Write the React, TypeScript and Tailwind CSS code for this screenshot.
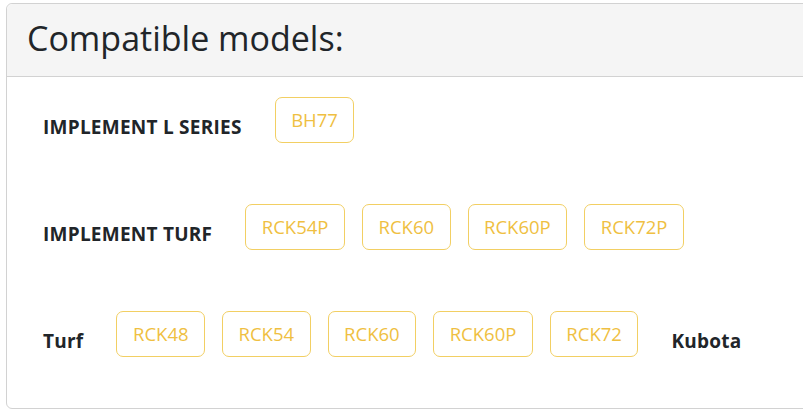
import React from 'react';

const rows: Array<{ label: string; models: string[]; brand?: string }> = [
  { label: 'IMPLEMENT L SERIES', models: ['BH77'] },
  { label: 'IMPLEMENT TURF', models: ['RCK54P', 'RCK60', 'RCK60P', 'RCK72P'] },
  { label: 'Turf', models: ['RCK48', 'RCK54', 'RCK60', 'RCK60P', 'RCK72'], brand: 'Kubota' },
];

function ModelTag({ name }: { name: string }) {
  return (
    <span className="flex h-[46px] items-center rounded-[7px] border border-[#f2cf63] px-[15.5px] text-[18.5px] text-[#efbf42]">
      {name}
    </span>
  );
}

export default function App() {
  return (
    <div className="h-[418px] w-[803px] overflow-hidden bg-white pl-[6px] pt-[3px] font-['Open_Sans',sans-serif]">
      <div className="w-[820px] rounded-[6px] border border-[#d2d2d2] bg-white">
        <div className="flex h-[73px] items-center rounded-t-[6px] border-b border-[#d2d2d2] bg-[#f5f5f5] px-[20px] pb-[5px]">
          <h2 className="text-[34px] font-medium leading-none text-[#212529]">Compatible models:</h2>
        </div>
        <div className="flex h-[331px] flex-col gap-[61px] pl-[36px] pt-[20px]">
          {rows.map((row) => (
            <div key={row.label} className="flex items-center">
              <span className="mr-[33px] mt-[14px] text-[19px] font-bold tracking-[0.25px] text-[#212529]">{row.label}</span>
              <div className="flex gap-[17px]">
                {row.models.map((m, i) => (
                  <ModelTag key={m + i} name={m} />
                ))}
              </div>
              {row.brand && (
                <span className="ml-[33px] mt-[14px] text-[19px] font-bold tracking-[0.25px] text-[#212529]">{row.brand}</span>
              )}
            </div>
          ))}
        </div>
      </div>
    </div>
  );
}
